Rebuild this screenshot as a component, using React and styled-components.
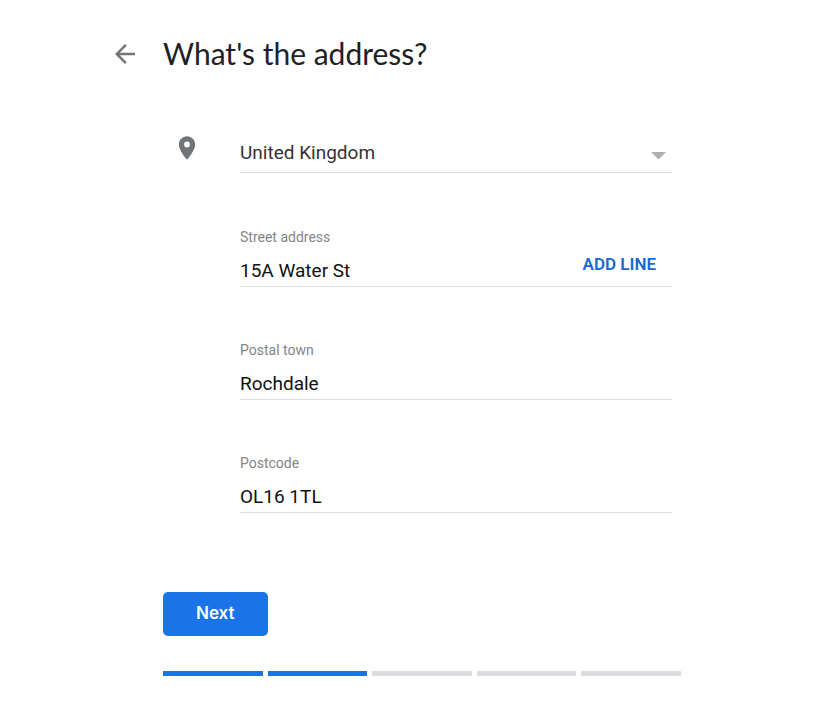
import React, { useState } from "react";
import styled, { createGlobalStyle } from "styled-components";
import { MdArrowBack, MdLocationOn } from "react-icons/md";

const GlobalStyle = createGlobalStyle`
    * {
        box-sizing: border-box;
    }

    body {
        margin: 0;
        background: #fff;
        color: #202124;
        font-family: Roboto, sans-serif;
    }
`;

const Page = styled("main")`
    max-width: 960px;
    padding: 31px 152px 32px 110px;
`;

const Header = styled("header")`
    display: grid;
    grid-template-columns: 53px 1fr;
    align-items: center;
    height: 44px;
`;

const BackButton = styled("button")`
    display: flex;
    width: 30px;
    padding: 2px 0 0;
    border: 0;
    background: none;
    color: #757575;
    font-size: 30px;
    cursor: pointer;
`;

const Title = styled("h1")`
    margin: 0;
    font-family: "Google Sans", Lato, sans-serif;
    font-size: 30px;
    font-weight: 400;
    line-height: 44px;
    white-space: nowrap;
`;

const Form = styled("form")`
    padding-left: 53px;
`;

const AddressBlock = styled("div")`
    display: grid;
    grid-template-columns: 77px 1fr;
    margin-top: 57px;
    padding-right: 9px;
`;

const PinIcon = styled(MdLocationOn)`
    margin: 2px 0 0 10px;
    color: #70757a;
    font-size: 28px;
`;

const Fields = styled("div")`
    display: flex;
    flex-direction: column;
`;

const SelectBox = styled("div")`
    display: grid;
    align-items: center;
    height: 41px;
    border-bottom: 1px solid #dadce0;

    > * {
        grid-area: 1 / 1;
    }
`;

const Select = styled("select")`
    appearance: none;
    width: 100%;
    height: 40px;
    padding: 2px 32px 0 0;
    border: 0;
    background: none;
    color: #333;
    font: 400 19px/24px Roboto, sans-serif;
`;

const Caret = styled("svg")`
    justify-self: end;
    margin: 8px 6px 0 0;
    fill: #b0b0b0;
    pointer-events: none;
`;

const Field = styled("div")`
    height: 58px;
    margin-top: 56px;
    border-bottom: 1px solid #dadce0;

    & + & {
        margin-top: 55px;
    }
`;

const Label = styled("label")`
    display: block;
    color: #80868b;
    font-size: 14px;
    line-height: 16px;
`;

const InputRow = styled("div")`
    display: flex;
    align-items: flex-start;
`;

const Input = styled("input")`
    flex: 1;
    min-width: 0;
    height: 41px;
    padding: 9px 0 0;
    border: 0;
    outline: 0;
    background: none;
    color: #111;
    font: 400 19px/24px Roboto, sans-serif;
`;

const AddLineButton = styled("button")`
    padding: 0 16px;
    border: 0;
    background: none;
    color: #1967d2;
    font: 600 17px/38px Roboto, sans-serif;
    cursor: pointer;
`;

const NextButton = styled("button")`
    display: block;
    height: 44px;
    margin-top: 79px;
    padding: 0 33px 2px;
    border: 0;
    border-radius: 5px;
    background: #1a73e8;
    color: #fff;
    font: 600 17px/42px "Google Sans", Inter, sans-serif;
    cursor: pointer;
`;

const Progress = styled("div")`
    display: flex;
    gap: 5px;
    margin-top: 35px;
`;

const Step = styled("span")`
    flex: 1;
    height: 5px;
    background: ${({ $done }) => ($done ? "#1a73e8" : "#dadce0")};
`;

const fields = [
    { id: "street", label: "Street address", value: "15A Water St", canAddLine: true },
    { id: "town", label: "Postal town", value: "Rochdale" },
    { id: "postcode", label: "Postcode", value: "OL16 1TL" },
];

const TOTAL_STEPS = 5;

const App = () => {
    const [step, setStep] = useState(2);

    const handleSubmit = (e) => {
        e.preventDefault();
        setStep(Math.min(step + 1, TOTAL_STEPS));
    };

    return (
        <>
            <GlobalStyle />
            <Page>
                <Header>
                    <BackButton type="button" aria-label="Back"><MdArrowBack /></BackButton>
                    <Title>What's the address?</Title>
                </Header>
                <Form onSubmit={handleSubmit}>
                    <AddressBlock>
                        <PinIcon />
                        <Fields>
                            <SelectBox>
                                <Select aria-label="Country" defaultValue="GB">
                                    <option value="GB">United Kingdom</option>
                                </Select>
                                <Caret width="15" height="8" viewBox="0 0 15 8" aria-hidden="true">
                                    <path d="M0 0h15L7.500 7.500z" />
                                </Caret>
                            </SelectBox>
                            {fields.map(({ id, label, value, canAddLine }) => (
                                <Field key={id}>
                                    <Label htmlFor={id}>{label}</Label>
                                    <InputRow>
                                        <Input id={id} type="text" defaultValue={value} />
                                        {canAddLine && <AddLineButton type="button">ADD LINE</AddLineButton>}
                                    </InputRow>
                                </Field>
                            ))}
                        </Fields>
                    </AddressBlock>
                    <NextButton type="submit">Next</NextButton>
                    <Progress role="progressbar" aria-label="Steps" aria-valuenow={step} aria-valuemin={0} aria-valuemax={TOTAL_STEPS}>
                        {Array.from({ length: TOTAL_STEPS }, (_, i) => (
                            <Step key={i} $done={i < step} />
                        ))}
                    </Progress>
                </Form>
            </Page>
        </>
    );
};

export default App;
